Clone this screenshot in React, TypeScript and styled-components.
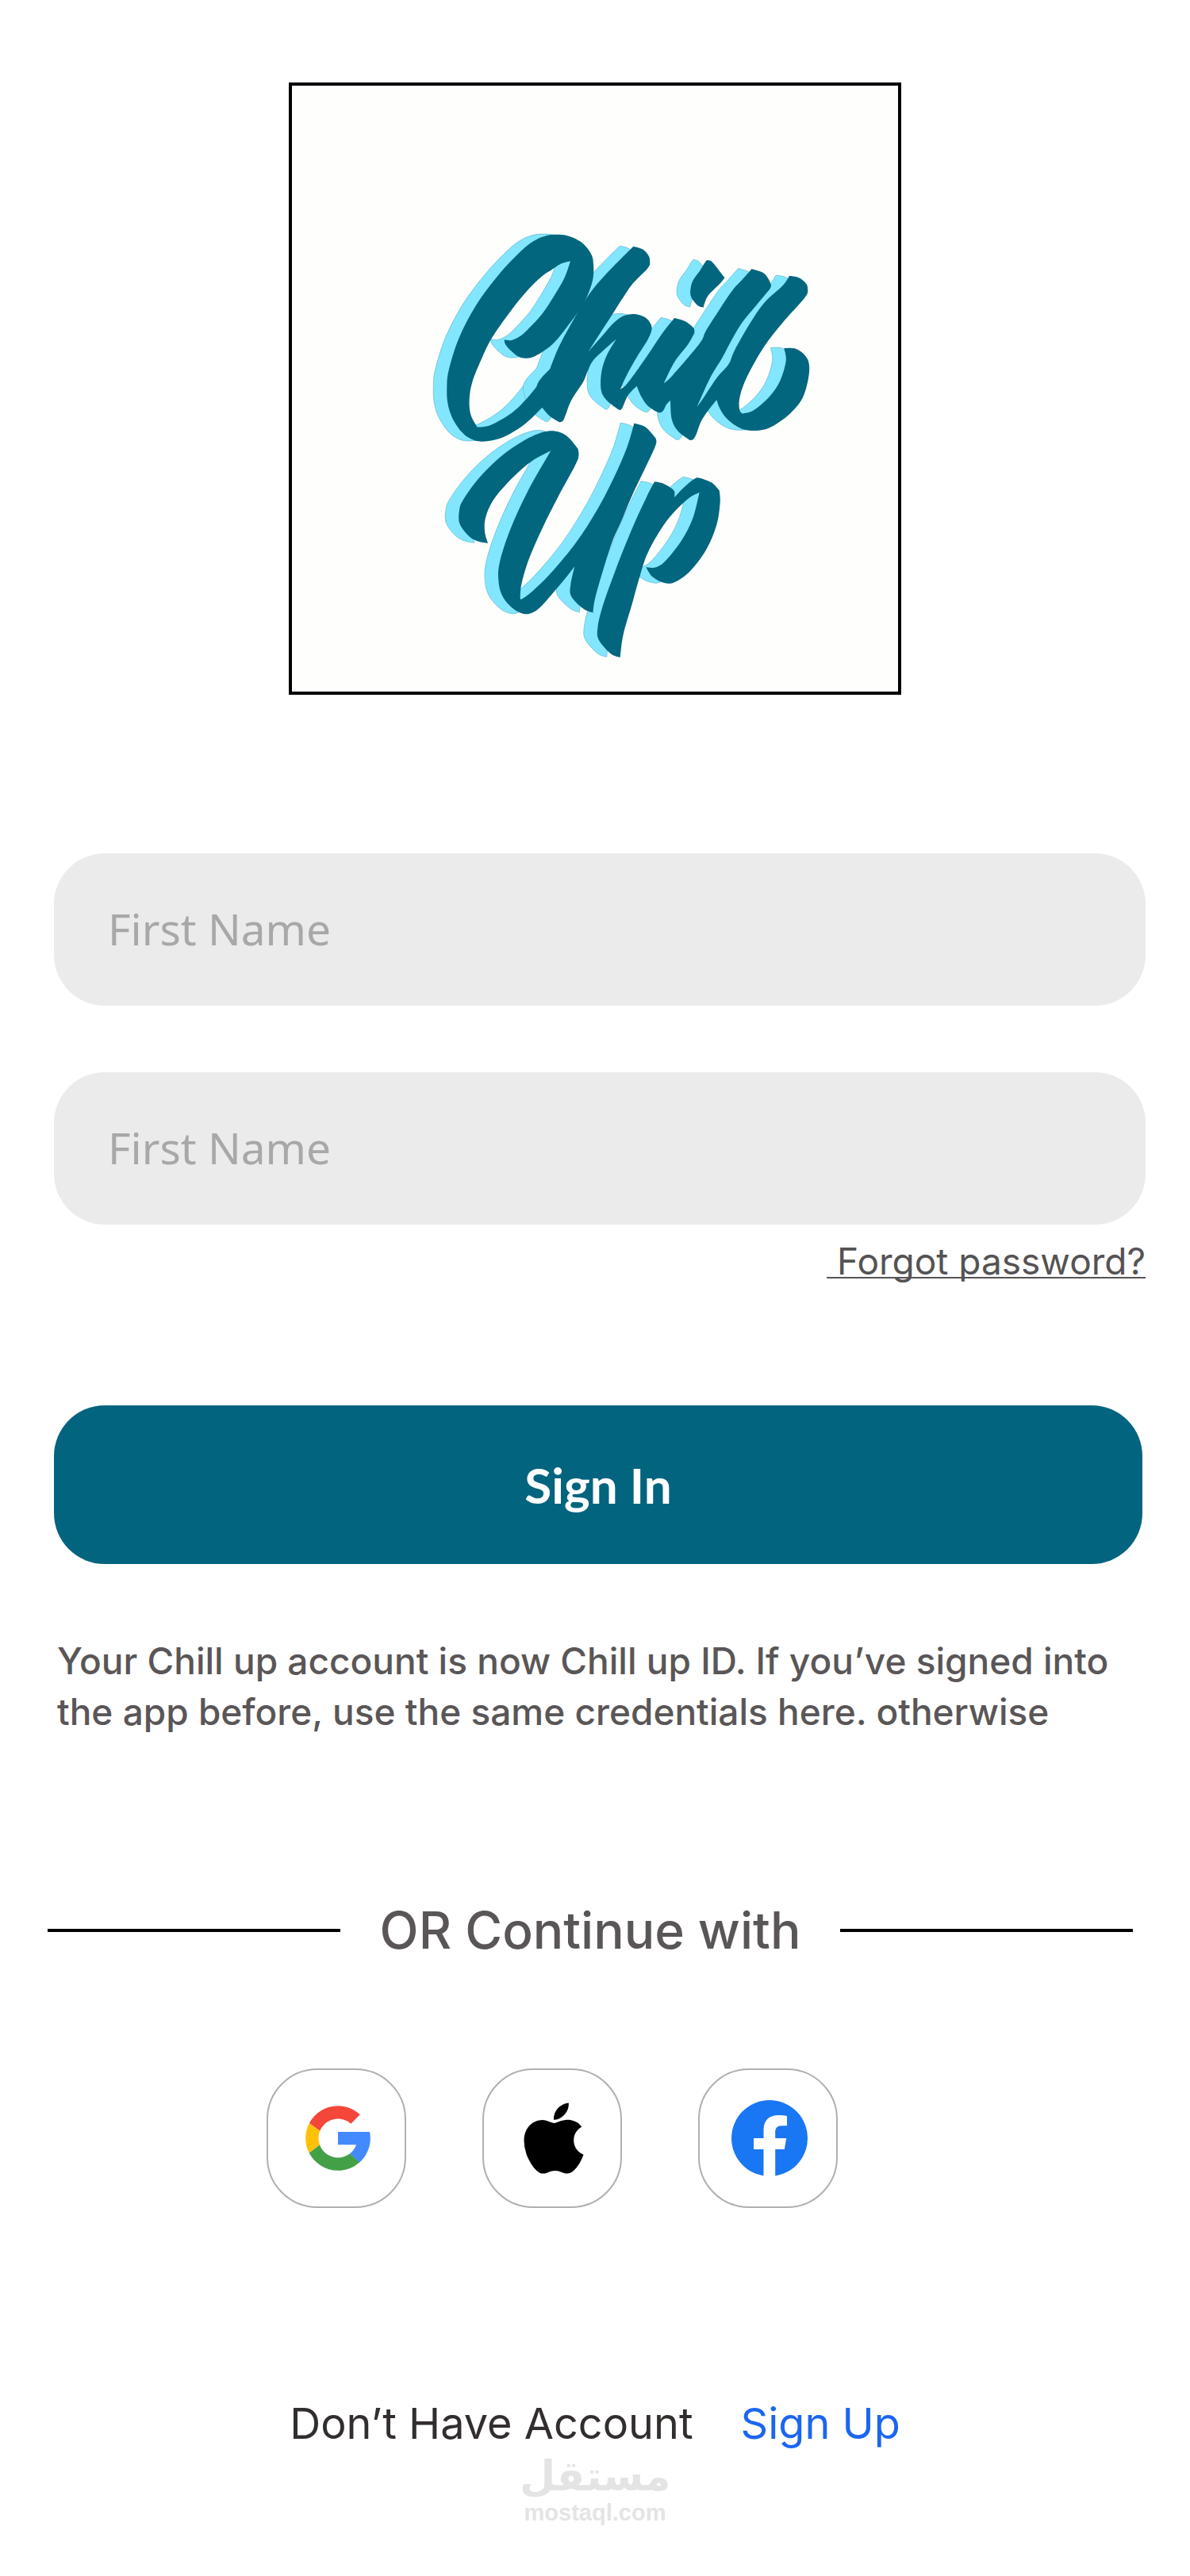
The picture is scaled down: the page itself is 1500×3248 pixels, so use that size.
import React from "react";
import styled, { createGlobalStyle } from "styled-components";
import { FaApple } from "react-icons/fa";

const GlobalStyle = createGlobalStyle`
  *, *::before, *::after { box-sizing: border-box; }
  body {
    margin: 0;
    background: #ffffff;
    font-family: Inter, "Liberation Sans", sans-serif;
  }
`;

const Page = styled.main`
  display: flex;
  flex-direction: column;
  padding: 104px 0 64px;
`;

const LogoFrame = styled.div`
  align-self: center;
  width: 772px;
  max-width: 90%;
  aspect-ratio: 1;
  border: 4px solid #000000;
  background: #fefefd;

  svg {
    display: block;
    width: 100%;
    height: 100%;
  }
`;

const Form = styled.form`
  display: flex;
  flex-direction: column;
  margin-top: 200px;
  padding: 0 56px 0 68px;
`;

const Fields = styled.div`
  display: flex;
  flex-direction: column;
  gap: 84px;
`;

const Field = styled.input`
  width: 100%;
  height: 192px;
  padding: 0 68px 4px;
  border: 0;
  border-radius: 64px;
  background: #ebebeb;
  color: #555354;
  font-family: "Noto Sans", sans-serif;
  font-size: 55px;

  &::placeholder {
    color: #a8a8a8;
    opacity: 1;
  }
`;

const ForgotLink = styled.a`
  align-self: flex-end;
  margin-top: 14px;
  color: #555354;
  font-size: 46px;
  line-height: 64px;
  text-decoration: underline;
  text-decoration-thickness: 2px;
  text-decoration-skip-ink: none;
  text-underline-offset: 3px;
`;

const SubmitButton = styled.button`
  height: 200px;
  margin: 150px 4px 0 0;
  border: 0;
  border-radius: 64px;
  background: #02647f;
  color: #ffffff;
  font-family: Lato, sans-serif;
  font-size: 62px;
  font-weight: 700;
  cursor: pointer;
`;

const Notice = styled.p`
  margin: 90px 0 0;
  padding: 0 56px 0 72px;
  color: #5a5657;
  font-size: 46px;
  font-weight: 500;
  line-height: 64px;
`;

const Divider = styled.div`
  display: flex;
  align-items: center;
  gap: 50px;
  margin-top: 204px;
  padding: 0 72px 0 60px;
  color: #5a5657;
  font-size: 64px;
  font-weight: 500;
  line-height: 80px;
  white-space: nowrap;

  &::before,
  &::after {
    content: "";
    flex: 1;
    height: 4px;
    background: #000000;
  }
`;

const Socials = styled.div`
  display: flex;
  justify-content: center;
  gap: 96px;
  margin-top: 134px;
  padding-right: 108px;
`;

const SocialButton = styled.button`
  display: flex;
  align-items: center;
  justify-content: center;
  width: 176px;
  height: 176px;
  padding: 0 0 0 4px;
  border: 2px solid #b0b0b0;
  border-radius: 64px;
  background: #ffffff;
  color: #000000;
  cursor: pointer;
`;

const Account = styled.p`
  display: flex;
  justify-content: center;
  gap: 60px;
  margin: 236px 0 0;
  color: #332e2e;
  font-size: 54px;
  line-height: 72px;
`;

const SignUpLink = styled.a`
  color: #1b66f0;
  text-decoration: none;
`;

const Watermark = styled.footer`
  display: flex;
  flex-direction: column;
  align-items: center;
  color: #e4e4e4;
  font-weight: 700;
`;

const WatermarkName = styled.span`
  font-family: "DejaVu Sans", sans-serif;
  font-size: 52px;
  line-height: 60px;
`;

const WatermarkSite = styled.span`
  font-family: "Liberation Sans", sans-serif;
  font-size: 29px;
  line-height: 32px;
`;

type Point = [number, number];

/* Each shape is a closed outline; "|" marks a sharp corner shared by two smooth runs. */
function brush(source: string): string {
  const runs = source.split("|").map((run) =>
    run
      .trim()
      .split(/\s+/)
      .map((pair) => pair.split(",").map(Number) as Point)
  );
  let d = `M${runs[0][0]}`;
  runs.forEach((run, index) => {
    const points = [...run, runs[(index + 1) % runs.length][0]];
    for (let i = 0; i < points.length - 1; i += 1) {
      const before = points[i - 1] ?? points[i];
      const from = points[i];
      const to = points[i + 1];
      const after = points[i + 2] ?? to;
      d += `C${from[0] + (to[0] - before[0]) / 6},${from[1] + (to[1] - before[1]) / 6} `;
      d += `${to[0] - (after[0] - from[0]) / 6},${to[1] - (after[1] - from[1]) / 6} ${to}`;
    }
  });
  return `${d}Z`;
}

const brushShapes = [
  // capital loop
  "520,78 580,80 640,107 676,152 684,190 683,240 668,292 640,350 598,408 550,470 510,508 462,538 430,545 402,540 372,517 351,492 | 347,475 375,477 410,460 442,430 492,375 535,310 575,240 | 597,178 560,188 530,208 490,235 435,288 370,368 300,468 260,550 226,635 215,700 220,758 | 245,806 295,798 375,752 430,700 475,645 | 520,585 620,640 | 490,732 430,790 370,830 315,853 260,860 220,850 185,823 150,770 133,715 130,655 137,590 175,470 240,345 325,230 415,135 470,95",
  // connected lower-case run
  "835,122 870,133 894,160 | 898,190 885,210 830,266 790,325 750,388 700,465 | 665,520 722,455 762,410 800,384 840,378 880,391 903,420 | 903,445 888,478 850,538 812,605 | 785,663 810,643 860,575 905,510 945,450 | 990,393 1030,405 1062,430 | 1066,450 1040,495 990,560 | 950,640 985,608 1085,490 1110,440 1160,362 1210,288 1245,250 | 1283,207 1330,225 1355,265 | 1350,285 1300,345 1250,405 1210,470 1170,545 1125,620 | 1075,730 1100,695 1150,620 1195,568 1218,515 1275,415 1330,335 1400,270 | 1425,233 1460,240 1490,265 | 1495,295 1480,320 1400,410 1330,500 1265,615 1238,690 1236,738 | 1248,755 1290,742 1350,690 1390,630 1412,555 | 1405,507 1445,508 1480,530 1499,565 1497,620 1475,695 1430,752 1365,800 1310,818 1245,812 1190,775 1162,735 | 1150,703 1120,740 1092,782 1072,835 1060,853 | 1048,855 1003,820 980,775 | 975,705 960,720 948,743 930,750 890,725 865,690 | 848,650 815,685 792,735 | 780,740 735,705 713,665 715,595 735,533 | 770,473 730,508 682,555 662,595 645,635 600,705 572,776 | 555,787 520,765 | 490,732 470,650 | 520,585 552,505 600,415 650,330 700,262 765,192",
  // dot
  "1120,175 1137,185 | 1180,240 1165,260 1120,305 1105,335 | 1100,353 1078,345 1053,312 1052,278 1062,248 1088,212 1110,177",
  // second word, opening letter
  "285,1245 245,1237 210,1215 178,1170 177,1120 192,1080 250,1000 330,920 420,857 500,823 550,823 590,845 | 626,888 628,915 615,950 550,1070 490,1190 440,1305 412,1400 | 407,1455 415,1455 455,1425 530,1350 620,1240 700,1115 760,1000 810,885 | 838,791 880,805 | 920,848 919,875 880,960 830,1065 790,1160 755,1240 718,1355 690,1455 | 682,1508 645,1492 600,1445 598,1400 | 613,1333 580,1375 545,1417 490,1480 455,1507 420,1512 380,1492 342,1448 326,1395 329,1320 370,1192 435,1050 | 523,895 450,935 380,995 310,1075 277,1145 273,1200",
  // second word, closing letter
  "915,1012 950,1020 988,1045 | 990,1072 1025,1035 1065,1002 1085,998 1130,1015 | 1160,1045 1163,1090 1150,1175 1110,1270 1050,1350 990,1393 950,1394 907,1372 | 883,1336 920,1336 960,1308 1020,1230 1060,1150 | 1085,1052 1035,1082 960,1162 890,1280 855,1385 830,1475 797,1590 | 785,1677 750,1663 705,1612 700,1565 720,1480 770,1340 830,1190 885,1070",
].map(brush);

const BrandMark = () => (
  <svg viewBox="-456 -486 2292 2292" role="img" aria-label="Chill Up">
    <g transform="translate(-51 -2)" fill="#82e6fe" stroke="#5fb4c8" strokeWidth="2">
      {brushShapes.map((d) => (
        <path key={d} d={d} />
      ))}
    </g>
    <g fill="#02667f">
      {brushShapes.map((d) => (
        <path key={d} d={d} />
      ))}
    </g>
  </svg>
);

const GoogleIcon = () => (
  <svg width="98" height="98" viewBox="0 0 48 48" aria-hidden="true">
    <path fill="#448aff" d="M43.611 20.083H24v8h11.303c-.792 2.237-2.231 4.166-4.087 5.571l6.19 5.238C36.971 39.205 44 34 44 24c0-1.341-.138-2.65-.389-3.917z" />
    <path fill="#f44639" d="m6.306 14.691 6.571 4.819C14.655 15.108 18.961 12 24 12c3.059 0 5.842 1.154 7.961 3.039l5.657-5.657C34.046 6.053 29.268 4 24 4 16.318 4 9.656 8.337 6.306 14.691z" />
    <path fill="#43a047" d="M24 44c5.166 0 9.86-1.977 13.409-5.192l-6.19-5.238A11.91 11.91 0 0 1 24 36c-5.202 0-9.619-3.317-11.283-7.946l-6.522 5.025C9.505 39.556 16.227 44 24 44z" />
    <path fill="#ffc107" d="M6.306 14.691A19.9 19.9 0 0 0 4 24c0 3.26.78 6.34 2.195 9.079l6.522-5.025A12.05 12.05 0 0 1 12 24c0-1.59.31-3.11.877-4.49z" />
  </svg>
);

const FacebookIcon = () => (
  <svg width="96" height="96" viewBox="0 0 96 96" aria-hidden="true">
    <circle cx="48" cy="48" r="48" fill="#1977f3" />
    <path fill="#ffffff" d="M40.500 96V62H28V48h12.500V37.500C40.500 25 48 19 59 19c4 0 8 .4 11 1v12.300h-6.500c-6.200 0-8.300 3.500-8.300 8V48h14l-2.400 14H55.200v34z" />
  </svg>
);

export default function App() {
  return (
    <>
      <GlobalStyle />
      <Page>
        <LogoFrame>
          <BrandMark />
        </LogoFrame>
        <Form onSubmit={(event) => event.preventDefault()}>
          <Fields>
            <Field type="text" aria-label="First Name" placeholder="First Name" />
            <Field type="text" aria-label="First Name" placeholder="First Name" />
          </Fields>
          <ForgotLink href="#forgot">{"\u00a0Forgot password?"}</ForgotLink>
          <SubmitButton type="submit">Sign In</SubmitButton>
        </Form>
        <Notice>
          Your Chill up account is now Chill up ID. If you’ve signed into the app
          before, use the same credentials here. otherwise
        </Notice>
        <Divider>OR Continue with</Divider>
        <Socials>
          <SocialButton type="button" aria-label="Google">
            <GoogleIcon />
          </SocialButton>
          <SocialButton type="button" aria-label="Apple">
            <FaApple size={102} />
          </SocialButton>
          <SocialButton type="button" aria-label="Facebook">
            <FacebookIcon />
          </SocialButton>
        </Socials>
        <Account>
          <span>Don’t Have Account</span>
          <SignUpLink href="#sign-up">Sign Up</SignUpLink>
        </Account>
        <Watermark>
          <WatermarkName lang="ar" dir="rtl">مستقل</WatermarkName>
          <WatermarkSite>mostaql.com</WatermarkSite>
        </Watermark>
      </Page>
    </>
  );
}
